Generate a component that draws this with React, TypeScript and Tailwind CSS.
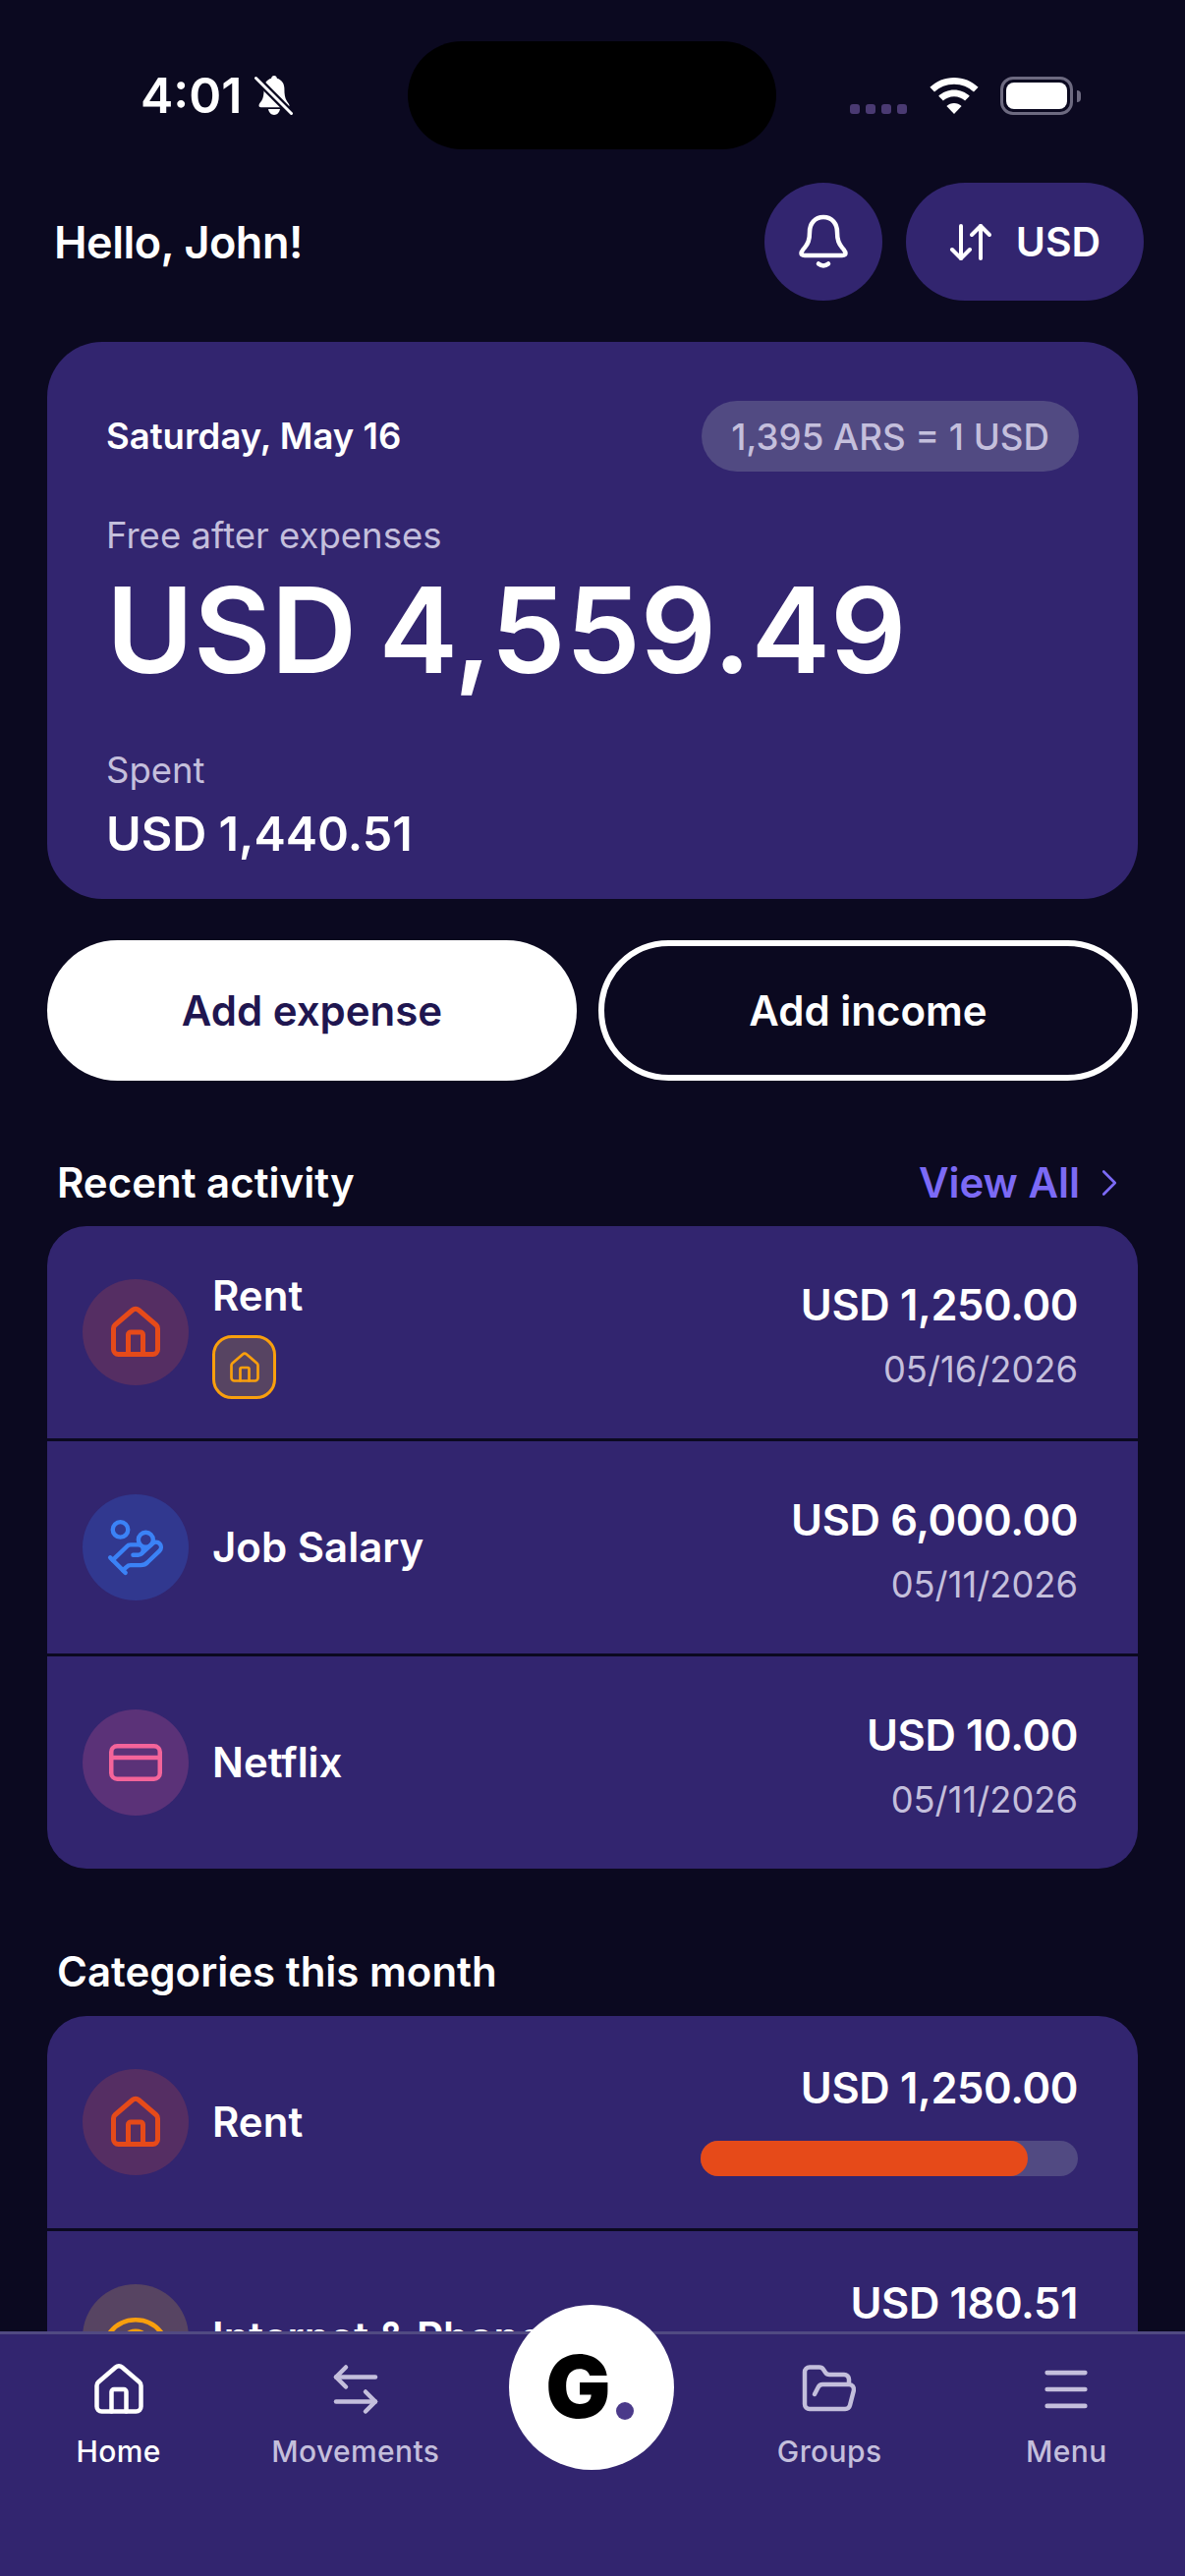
import React from "react";
import { FolderOpen, Menu, HandCoins, ChevronRight, ArrowLeftRight } from "lucide-react";

const HouseIcon = ({ className = "", strokeWidth = 2 }: { className?: string; strokeWidth?: number }) => (
  <svg viewBox="0 0 24 24" fill="none" stroke="currentColor" strokeWidth={strokeWidth} strokeLinecap="round" strokeLinejoin="round" className={className}>
    <path d="M9 21v-8a1 1 0 0 1 1-1h4a1 1 0 0 1 1 1v8" />
    <path d="M3 10.500a2 2 0 0 1 .7-1.500l7-6a2 2 0 0 1 2.600 0l7 6a2 2 0 0 1 .7 1.500V19a2 2 0 0 1-2 2H5a2 2 0 0 1-2-2z" />
  </svg>
);

const MutedBell = () => (
  <svg viewBox="0 0 40 42" className="w-[40px] h-[42px] text-white" fill="currentColor">
    <path d="M21 1c-1.600 0-2.800 1.200-2.900 2.800C13.600 5 10.600 9 10.600 14c0 6-.6 10-2.300 12.500-.8 1.200-2.800 3-2.800 5 0 1 .8 1.700 2 1.700h27c1.200 0 2-.7 2-1.700 0-1.800-2-3.500-2.800-5-1.700-2.500-2.300-6.500-2.300-12.500 0-5-3-9-7.500-10.200C23.800 2.200 22.600 1 21 1z" />
    <path d="M15 35h12c-.4 3-3 6-6 6s-5.600-3-6-6z" />
    <path d="M2 3 L40 41" stroke="#0b0920" strokeWidth="7.500" />
    <path d="M2.500 3.500 L38.500 39.500" stroke="currentColor" strokeWidth="3" strokeLinecap="round" />
  </svg>
);

const StatusBar = () => (
  <div className="h-[186px] shrink-0 flex items-start relative">
    <div className="absolute left-[415px] top-[42px] w-[375px] h-[110px] rounded-[55px] bg-black" />
    <div className="absolute left-[143px] top-[72px] flex items-center gap-[12px]">
      <span className="text-[50px] leading-[50px] font-semibold text-white">4:01</span>
      <MutedBell />
    </div>
    <div className="absolute left-[865px] top-[106px] flex gap-[6px]">
      {[0, 1, 2, 3].map((i) => (
        <div key={i} className="w-[10px] h-[10px] rounded-[3px] bg-[#4a3a72]" />
      ))}
    </div>
    <svg viewBox="0 0 50 37" className="absolute left-[946px] top-[79px] w-[50px] h-[37px]" fill="#fff">
      <path d="M25 0c9.500 0 18.200 3.700 24.600 9.800L45 14.600C39.800 9.700 32.800 6.700 25 6.700S10.200 9.700 5 14.600L.4 9.800C6.800 3.700 15.500 0 25 0z" />
      <path d="M25 12.500c6.100 0 11.700 2.400 15.800 6.200l-4.700 4.800c-2.900-2.600-6.800-4.300-11.100-4.300s-8.200 1.700-11.100 4.300l-4.700-4.800c4.100-3.800 9.700-6.200 15.800-6.200z" />
      <path d="M25 26c2.900 0 5.600 1.100 7.600 2.900L25 37l-7.600-8.100c2-1.800 4.700-2.900 7.600-2.900z" />
    </svg>
    <div className="absolute left-[1018px] top-[78px] w-[74px] h-[39px] rounded-[13px] border-[3px] border-[#6d6a80] p-[3px]">
      <div className="w-full h-full rounded-[8px] bg-white" />
    </div>
    <div className="absolute left-[1096px] top-[92px] w-[4px] h-[12px] rounded-r-full bg-[#6d6a80]" />
  </div>
);

const HeaderBell = () => (
  <svg viewBox="0 0 60 60" fill="none" stroke="#fff" strokeWidth="4.500" strokeLinecap="round" strokeLinejoin="round" className="w-[60px] h-[60px]">
    <path d="M30 5c-9 0-14 7-14 15 0 9-2 12-5 16-3 3-6 8 0 8h38c6 0 3-5 0-8-3-4-5-7-5-16 0-8-5-15-14-15z" />
    <path d="M25 52.500c3 2.500 7 2.500 10 0" />
  </svg>
);

const SwapIcon = () => (
  <svg viewBox="0 0 44 40" fill="none" stroke="#fff" strokeWidth="4" strokeLinecap="round" strokeLinejoin="round" className="w-[44px] h-[40px]">
    <path d="M12 4v33" />
    <path d="M3 28l9 9 9-9" />
    <path d="M32 37V4" />
    <path d="M23 13l9-9 9 9" />
  </svg>
);

const Header = () => (
  <div className="flex items-center justify-between pl-[55px] pr-[42px] h-[120px]">
    <div className="text-[45px] font-semibold text-white tracking-[-0.5px] pt-[1px]">Hello, John!</div>
    <div className="flex gap-[24px]">
      <div className="w-[120px] h-[120px] rounded-full bg-[#32256f] flex items-center justify-center">
        <HeaderBell />
      </div>
      <div className="w-[242px] h-[120px] rounded-full bg-[#32256f] flex items-center justify-center gap-[24px]">
        <SwapIcon />
        <span className="text-[41px] font-semibold text-white pt-[1px]">USD</span>
      </div>
    </div>
  </div>
);

const Balance = () => (
  <div className="mx-[48px] mt-[42px] h-[567px] rounded-[56px] bg-[#32256f] pl-[60px] pr-[60px] pt-[60px]">
    <div className="flex items-center justify-between h-[72px]">
      <span className="text-[36.5px] font-semibold text-white pt-[1px]">Saturday, May 16</span>
      <span className="h-[72px] px-[30px] pt-[1px] rounded-full bg-[#514a82] flex items-center text-[36.7px] font-medium text-[#c4bfdc]">1,395 ARS = 1 USD</span>
    </div>
    <div className="mt-[42px] text-[36.5px] leading-[46px] text-[#c4bfdc]">Free after expenses</div>
    <div className="mt-[8px] text-[121px] leading-[130px] font-semibold text-white [word-spacing:-8px]">USD 4,559.49</div>
    <div className="mt-[55px] text-[36.5px] leading-[46px] text-[#c4bfdc]">Spent</div>
    <div className="mt-[14px] text-[48.5px] leading-[56px] font-semibold text-white">USD 1,440.51</div>
  </div>
);

const Actions = () => (
  <div className="mx-[48px] mt-[42px] flex gap-[22px]">
    <div className="w-[539px] h-[143px] rounded-full bg-white flex items-center justify-center text-[42px] font-semibold text-[#1f1650]">Add expense</div>
    <div className="flex-1 h-[143px] rounded-full border-[6px] border-white flex items-center justify-center text-[42px] font-semibold text-white">Add income</div>
  </div>
);

const Circle = ({ bg, children }: { bg: string; children: React.ReactNode }) => (
  <div className={`w-[108px] h-[108px] shrink-0 rounded-full flex items-center justify-center ${bg}`}>{children}</div>
);

const Row = ({ icon, name, tag, amount, date, bar, last }: { icon: React.ReactNode; name: string; tag?: boolean; amount: string; date?: string; bar?: boolean; last?: boolean }) => (
  <div className={`h-[216px] pl-[36px] pr-[61px] flex items-start pt-[54px] bg-[#32256f] ${last ? "" : "mb-[3px]"}`}>
    {icon}
    <div className={`ml-[24px] flex-1 flex flex-col ${tag ? "" : "h-[108px] justify-center"}`}>
      <div className={`text-[42px] leading-[50px] font-semibold text-white ${tag ? "-mt-[8px]" : ""}`}>{name}</div>
      {tag && (
        <div className="mt-[15px] w-[65px] h-[65px] rounded-[20px] border-[3px] border-[#f99f0d] bg-[#574462] flex items-center justify-center">
          <HouseIcon className="w-[36px] h-[36px] text-[#f99f0d]" strokeWidth={1.8} />
        </div>
      )}
    </div>
    <div className={`flex flex-col items-end ${bar ? "-mt-[7px]" : "mt-0"}`}>
      <div className="text-[43.5px] leading-[52px] font-semibold text-white tracking-[-0.4px]">{amount}</div>
      {date && <div className="mt-[17px] text-[36.3px] leading-[46px] text-[#c4bfdc]">{date}</div>}
      {bar && (
        <div className="mt-[28px] w-[384px] h-[36px] rounded-full bg-[#514a82]">
          <div className="h-full w-[333px] rounded-full bg-[#e64a19]" />
        </div>
      )}
    </div>
  </div>
);

const rentIcon = (
  <Circle bg="bg-[#552e63]">
    <HouseIcon className="w-[60px] h-[60px] text-[#e64a19]" strokeWidth={2} />
  </Circle>
);

const CardIcon = () => (
  <svg viewBox="0 0 54 38" fill="none" stroke="#f4649a" strokeWidth="4.500" strokeLinecap="round" strokeLinejoin="round" className="w-[54px] h-[38px]">
    <rect x="2.250" y="2.250" width="49.500" height="33.500" rx="6" />
    <path d="M2.250 14h49.500" />
  </svg>
);

const PhoneWifiIcon = () => (
  <svg viewBox="0 0 60 60" fill="none" stroke="#f99f0d" strokeWidth="4.500" strokeLinecap="round" className="w-[60px] h-[60px]">
    <path d="M4 25A33 33 0 0 1 56 25" />
    <path d="M20 28A14 14 0 0 1 40 28" />
    <path d="M30 40v.1" />
  </svg>
);

const Activity = () => (
  <>
    <div className="mx-[48px] mt-[76px] mb-[17px] pl-[10px] flex items-center justify-between h-[55px]">
      <span className="text-[42px] font-semibold text-white">Recent activity</span>
      <span className="flex items-center gap-[7px] pr-[6px] text-[42px] font-semibold text-[#7c6af5]">
        View All
        <ChevronRight className="w-[46px] h-[46px]" strokeWidth={1.4} />
      </span>
    </div>
    <div className="mx-[48px] rounded-[40px] overflow-hidden bg-[#0b0920]">
      <Row icon={rentIcon} name="Rent" tag amount="USD 1,250.00" date="05/16/2026" />
      <Row
        icon={
          <Circle bg="bg-[#31388f]">
            <HandCoins className="w-[62px] h-[62px] text-[#3b82f6]" strokeWidth={1.7} />
          </Circle>
        }
        name="Job Salary"
        amount="USD 6,000.00"
        date="05/11/2026"
      />
      <Row
        icon={
          <Circle bg="bg-[#5b3278]">
            <CardIcon />
          </Circle>
        }
        name="Netflix"
        amount="USD 10.00"
        date="05/11/2026"
        last
      />
    </div>
  </>
);

const Categories = () => (
  <>
    <div className="mx-[48px] mt-[77px] mb-[18px] pl-[10px] h-[55px] flex items-center text-[42px] font-semibold text-white">Categories this month</div>
    <div className="mx-[48px] rounded-t-[40px] overflow-hidden bg-[#0b0920]">
      <Row icon={rentIcon} name="Rent" amount="USD 1,250.00" bar />
      <Row
        icon={
          <Circle bg="bg-[#574462]">
            <PhoneWifiIcon />
          </Circle>
        }
        name="Internet & Phone"
        amount="USD 180.51"
        bar
        last
      />
    </div>
  </>
);

const NavItem = ({ icon, label, active }: { icon: React.ReactNode; label: string; active?: boolean }) => (
  <div className={`flex flex-col items-center pt-[26px] ${active ? "text-white" : "text-[#c4bfdc]"}`}>
    <div className="h-[60px] flex items-center justify-center">{icon}</div>
    <div className="mt-[15px] text-[30px] leading-[36px] tracking-[0.4px] font-medium">{label}</div>
  </div>
);

const BottomNav = () => (
  <div className="absolute left-0 right-0 bottom-0 h-[249px] bg-[#32256f] border-t-[3px] border-[#514a82] grid grid-cols-5">
    <NavItem active label="Home" icon={<HouseIcon className="w-[60px] h-[60px]" strokeWidth={1.8} />} />
    <NavItem label="Movements" icon={<ArrowLeftRight className="w-[60px] h-[60px]" strokeWidth={1.8} />} />
    <div className="relative">
      <div className="absolute left-[36px] -top-[30px] w-[168px] h-[168px] rounded-full bg-white flex items-center justify-center">
        <span className="text-[88px] leading-[88px] font-black text-black -ml-[28px] -mt-[2px]">G</span>
        <div className="absolute left-[109px] top-[99px] w-[18px] h-[18px] rounded-full bg-[#4b3a8a]" />
      </div>
    </div>
    <NavItem label="Groups" icon={<FolderOpen className="w-[60px] h-[60px]" strokeWidth={1.8} />} />
    <NavItem label="Menu" icon={<Menu className="w-[58px] h-[58px]" strokeWidth={1.9} />} />
  </div>
);

export default function App() {
  return (
    <div className="relative w-[1206px] h-[2622px] overflow-hidden bg-[#0b0920] font-['Inter',sans-serif]">
      <StatusBar />
      <Header />
      <Balance />
      <Actions />
      <Activity />
      <Categories />
      <BottomNav />
    </div>
  );
}
